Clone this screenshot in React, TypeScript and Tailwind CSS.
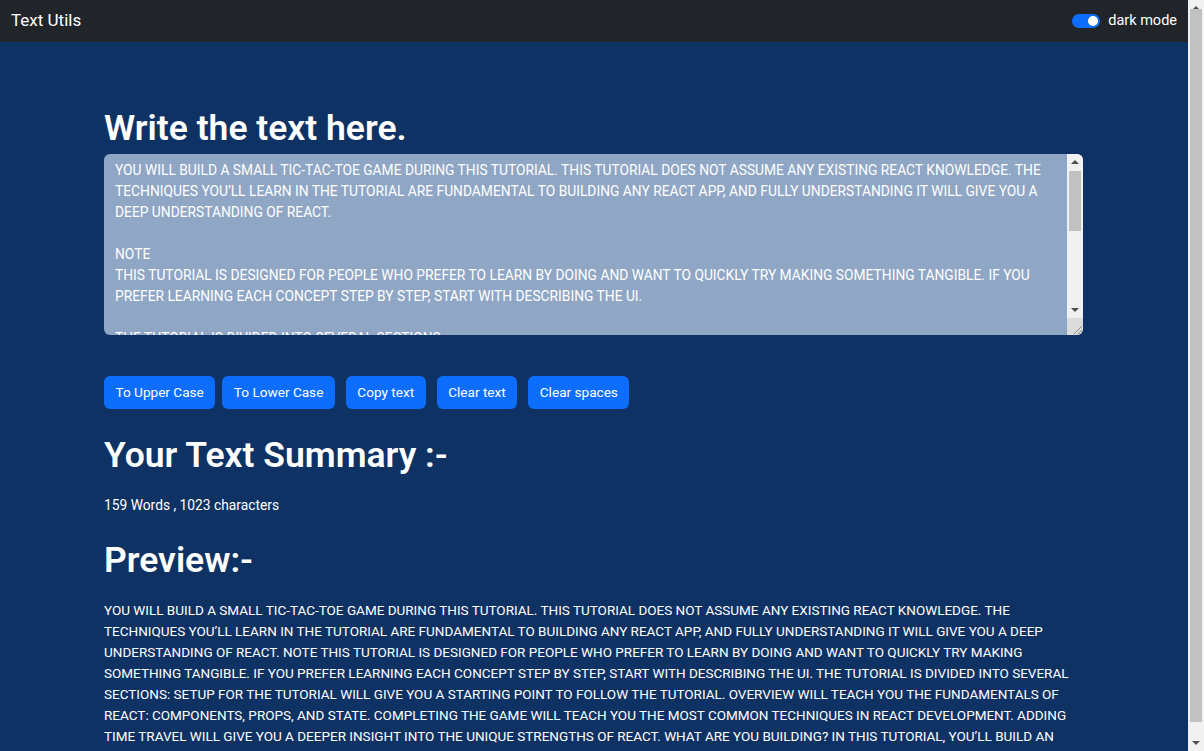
import React, { useState } from 'react';

const initialText = `YOU WILL BUILD A SMALL TIC-TAC-TOE GAME DURING THIS TUTORIAL. THIS TUTORIAL DOES NOT ASSUME ANY EXISTING REACT KNOWLEDGE. THE TECHNIQUES YOU’LL LEARN IN THE TUTORIAL ARE FUNDAMENTAL TO BUILDING ANY REACT APP, AND FULLY UNDERSTANDING IT WILL GIVE YOU A DEEP UNDERSTANDING OF REACT.

NOTE
THIS TUTORIAL IS DESIGNED FOR PEOPLE WHO PREFER TO LEARN BY DOING AND WANT TO QUICKLY TRY MAKING SOMETHING TANGIBLE. IF YOU PREFER LEARNING EACH CONCEPT STEP BY STEP, START WITH DESCRIBING THE UI.

THE TUTORIAL IS DIVIDED INTO SEVERAL SECTIONS:

SETUP FOR THE TUTORIAL WILL GIVE YOU A STARTING POINT TO FOLLOW THE TUTORIAL.
OVERVIEW WILL TEACH YOU THE FUNDAMENTALS OF REACT: COMPONENTS, PROPS, AND STATE.
COMPLETING THE GAME WILL TEACH YOU THE MOST COMMON TECHNIQUES IN REACT DEVELOPMENT.
ADDING TIME TRAVEL WILL GIVE YOU A DEEPER INSIGHT INTO THE UNIQUE STRENGTHS OF REACT.
WHAT ARE YOU BUILDING?
IN THIS TUTORIAL, YOU’LL BUILD AN INTERACTIVE TIC-TAC-TOE GAME WITH REACT.`;

const buttons = [
  { label: 'To Upper Case', cls: '' },
  { label: 'To Lower Case', cls: 'ml-[7px]' },
  { label: 'Copy text', cls: 'ml-[11px]' },
  { label: 'Clear text', cls: 'ml-[11px]' },
  { label: 'Clear spaces', cls: 'ml-[11px]' },
];

const UpArrow = () => (
  <span className="w-0 h-0 border-l-[4px] border-r-[4px] border-b-[4px] border-l-transparent border-r-transparent border-b-[#505050]" />
);

const DownArrow = () => (
  <span className="w-0 h-0 border-l-[4px] border-r-[4px] border-t-[4px] border-l-transparent border-r-transparent border-t-[#505050]" />
);

// desktop-style scrollbar (the screenshot browser shows classic scrollbars)
const Scrollbar: React.FC<{ thumbTop: number; thumbHeight: number; corner?: boolean }> = ({
  thumbTop,
  thumbHeight,
  corner,
}) => (
  <div className="w-[16px] h-full bg-[#f1f1f1] flex flex-col shrink-0">
    <div className="h-[16px] flex items-center justify-center shrink-0">
      <UpArrow />
    </div>
    <div className="flex-1 px-[2px]">
      <div className="bg-[#c1c1c1]" style={{ marginTop: thumbTop, height: thumbHeight }} />
    </div>
    <div className="h-[16px] flex items-center justify-center shrink-0">
      <DownArrow />
    </div>
    {corner && (
      <div className="h-[17px] bg-[#dcdcdc] flex items-end justify-end shrink-0">
        <svg width="12" height="12" viewBox="0 0 12 12">
          <path d="M11 3 L3 11 M11 7 L7 11" stroke="#8a8a8a" strokeWidth="1" fill="none" />
        </svg>
      </div>
    )}
  </div>
);

const Navbar: React.FC = () => {
  return (
    <nav className="h-[42px] bg-[#212529] flex items-center justify-between pl-[11px] pr-[11px]">
      <span className="text-[17px] text-white">Text Utils</span>
      <label className="flex items-center gap-[8px] text-[14.5px] text-white">
        <span className="w-[28px] h-[14px] rounded-full bg-[#0d6efd] flex items-center justify-end pr-[2px]">
          <span className="w-[10px] h-[10px] rounded-full bg-white" />
        </span>
        dark mode
      </label>
    </nav>
  );
};

export default function App() {
  const [text, setText] = useState(initialText);

  return (
    <div className="h-screen flex bg-[#0f3264] font-['Roboto',sans-serif] text-white">
      <div className="flex-1 overflow-y-auto">
        <Navbar />
        <div className="ml-[104px] w-[979px] pt-[65px] pb-[10px]">
          <h1 className="text-[35.5px] leading-[1.2] font-semibold">Write the text here.</h1>
          <div className="relative mt-[4px] h-[181px] rounded-md overflow-hidden">
            <textarea
              className="block w-full h-full resize-none bg-[#8fa6c4] text-white text-[13.8px] leading-[21px] pl-[11px] pr-[28px] py-[6px] outline-none"
              value={text}
              onChange={(e) => setText(e.target.value)}
            />
            <div className="absolute right-0 top-0 bottom-0">
              <Scrollbar thumbTop={1} thumbHeight={60} corner />
            </div>
          </div>
          <div className="mt-[41px] flex">
            {buttons.map((b) => (
              <button
                key={b.label}
                className={`${b.cls} h-[33px] px-[11.5px] rounded-md bg-[#0d6efd] text-white text-[13.6px] leading-[21px]`}
              >
                {b.label}
              </button>
            ))}
          </div>
          <h1 className="mt-[25px] text-[35.5px] leading-[1.2] font-semibold">Your Text Summary :-</h1>
          <p className="mt-[19px] text-[13.8px] leading-[21px]">159 Words , 1023 characters</p>
          <h1 className="mt-[23px] text-[35.5px] leading-[1.2] font-semibold">Preview:-</h1>
          <p className="mt-[18.5px] text-[13.5px] leading-[21px]">{text}</p>
        </div>
      </div>
      <Scrollbar thumbTop={-7} thumbHeight={713} />
    </div>
  );
}
